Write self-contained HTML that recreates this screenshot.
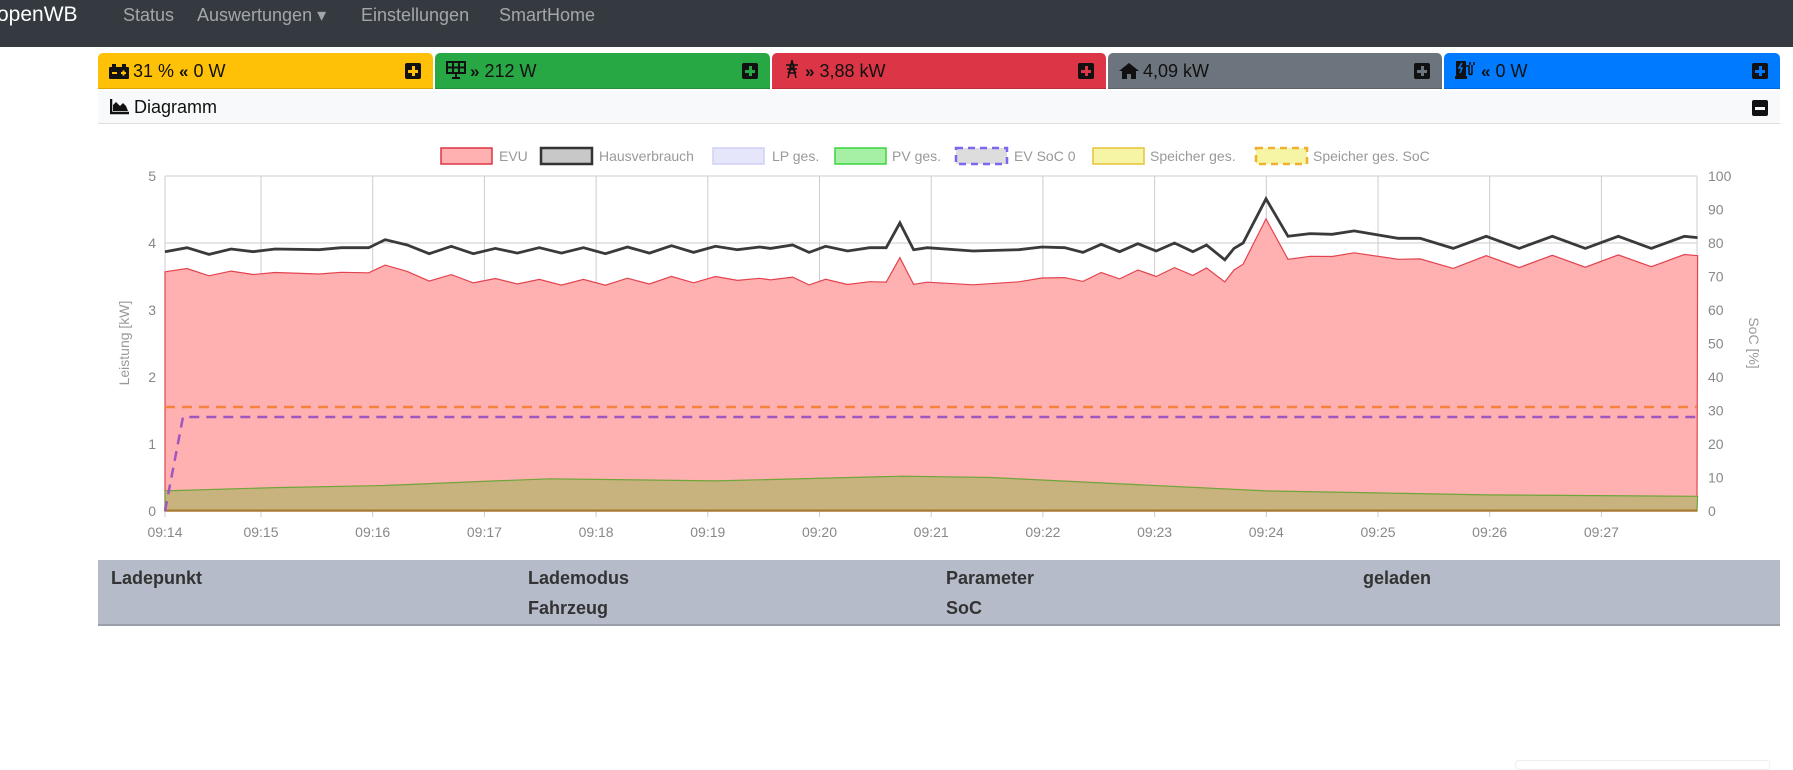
<!DOCTYPE html>
<html><head><meta charset="utf-8">
<style>
*{box-sizing:border-box;margin:0;padding:0}
body{width:1793px;height:766px;overflow:hidden;background:#fff;font-family:"Liberation Sans",sans-serif;position:relative}
.nav{position:absolute;left:0;top:0;width:1793px;height:47px;background:#343a40}
.nav span{position:absolute;top:5px;font-size:18px;color:rgba(255,255,255,.55);line-height:20px}
.nav .brand{color:#fff;font-size:21px;top:5px;left:-3px}
.tile{position:absolute;top:53px;height:36px;border-radius:5px 5px 0 0;font-size:18px;color:#111;line-height:36px;padding-left:11px;border-bottom:1px solid rgba(0,0,0,.15)}
.tile .pl{position:absolute;right:12px;top:10px;width:16px;height:16px;background:#111;border-radius:2px}
.tile .pl:before{content:"";position:absolute;left:7px;top:3px;width:3px;height:10px;background:var(--c)}
.tile .pl:after{content:"";position:absolute;left:3px;top:7px;width:10px;height:3px;background:var(--c)}
.ic{display:inline-block;vertical-align:-2px;margin-right:4px}
.hdr{position:absolute;left:98px;top:91px;width:1682px;height:33px;background:#f8f9fa;border-bottom:1px solid #ddd;font-size:18px;line-height:33px;padding-left:12px;color:#111}
.mn{position:absolute;right:12px;top:9px;width:16px;height:16px;background:#111;border-radius:2px}
.mn:after{content:"";position:absolute;left:3px;top:7px;width:10px;height:3px;background:#f8f9fa}
.tbl{position:absolute;left:98px;top:560px;width:1682px;height:66px;background:#b6bbca;border-bottom:2px solid #9a9ea9;font-weight:bold;font-size:18px;color:#333}
.tbl span{position:absolute}
svg text{font-family:"Liberation Sans",sans-serif}
</style></head><body>
<div class="nav">
<span class="brand">openWB</span>
<span style="left:123px">Status</span>
<span style="left:197px">Auswertungen &#9662;</span>
<span style="left:361px">Einstellungen</span>
<span style="left:499px">SmartHome</span>
</div>

<div class="tile" style="left:98px;width:335px;background:#ffc107;--c:#ffc107"><svg class="ic" width="20" height="16" viewBox="0 0 20 16"><rect x="0" y="4" width="20" height="12" rx="1" fill="#111"/><rect x="3" y="1" width="4" height="3" fill="#111"/><rect x="13" y="1" width="4" height="3" fill="#111"/><rect x="3" y="9" width="5" height="2" fill="#ffc107"/><rect x="12" y="9" width="5" height="2" fill="#ffc107"/><rect x="13.5" y="7.5" width="2" height="5" fill="#ffc107"/></svg>31 % <b style="font-size:17px">&#171;</b> 0 W<i class="pl"></i></div>
<div class="tile" style="left:435px;width:335px;background:#28a745;--c:#28a745"><svg class="ic" width="20" height="18" viewBox="0 0 20 18"><rect x="1" y="1" width="18" height="11" fill="none" stroke="#111" stroke-width="2"/><path d="M7 1v11M13 1v11M1 6.5h18M10 12v4M6 17h8" stroke="#111" stroke-width="2"/></svg><b style="font-size:17px">&#187;</b> 212 W<i class="pl"></i></div>
<div class="tile" style="left:772px;width:334px;background:#dc3545;--c:#dc3545"><svg class="ic" width="18" height="20" viewBox="0 0 18 20"><path d="M9 1L5 19M9 1l4 18M3 6h12M4 10h10M6 14h6M6 6l7 8M12 6l-7 8" stroke="#111" stroke-width="1.5" fill="none"/></svg><b style="font-size:17px">&#187;</b> 3,88 kW<i class="pl"></i></div>
<div class="tile" style="left:1108px;width:334px;background:#6c757d;--c:#6c757d"><svg class="ic" width="20" height="17" viewBox="0 0 20 17"><path d="M10 1L0 9h3v8h5v-5h4v5h5V9h3z" fill="#111"/></svg>4,09 kW<i class="pl"></i></div>
<div class="tile" style="left:1444px;width:336px;background:#007bff;--c:#007bff"><svg class="ic" width="22" height="19" viewBox="0 0 22 19"><rect x="1" y="1" width="10" height="15" rx="1" fill="#111"/><rect x="0" y="16" width="12" height="3" fill="#111"/><path d="M7 3l-3 5h3l-2 5" stroke="#007bff" stroke-width="1.5" fill="none"/><path d="M11 6h3v7c0 2 3 2 3 0V5M15 2v3M19 2v3" stroke="#111" stroke-width="1.6" fill="none"/></svg><b style="font-size:17px">&#171;</b> 0 W<i class="pl"></i></div>

<div class="hdr"><svg class="ic" width="20" height="17" viewBox="0 0 20 17"><path d="M1 1v14h18" stroke="#111" stroke-width="2.5" fill="none"/><path d="M3 13V7l3-3 4 4 3-3 3 3 2 5z" fill="#111"/></svg>Diagramm<i class="mn"></i></div>

<svg style="position:absolute;left:0;top:0" width="1793" height="766" id="ch">
<g font-size="14" fill="#999">
<rect x="441" y="148" width="51" height="16" fill="#ffb1b1" stroke="#dc3545" stroke-width="1.5"/><text x="499" y="161">EVU</text>
<rect x="541" y="148" width="51" height="16" fill="#c8c8c8" stroke="#333" stroke-width="2.5"/><text x="599" y="161">Hausverbrauch</text>
<rect x="713" y="148" width="51" height="16" fill="#e6e6fa" stroke="#d0d0f5" stroke-width="1.5"/><text x="772" y="161">LP ges.</text>
<rect x="835" y="148" width="51" height="16" fill="#a5f0a5" stroke="#3cd43c" stroke-width="1.5"/><text x="892" y="161">PV ges.</text>
<rect x="956" y="148" width="51" height="16" fill="#ddd" stroke="#7b68ee" stroke-width="2.5" stroke-dasharray="7,5"/><text x="1014" y="161">EV SoC 0</text>
<rect x="1093" y="148" width="51" height="16" fill="#f5f5a5" stroke="#e8c23c" stroke-width="1.5"/><text x="1150" y="161">Speicher ges.</text>
<rect x="1256" y="148" width="51" height="16" fill="#f5f5a5" stroke="#f0b030" stroke-width="2.5" stroke-dasharray="7,5"/><text x="1313" y="161">Speicher ges. SoC</text>
</g>
<g id="grid" stroke="#ccc" stroke-width="1"></g>
<path id="evu" fill="#ffb1b1" stroke="#e3434f" stroke-width="1.2"/>
<path id="pv" fill="#c8b37f" stroke="#6fa53a" stroke-width="1.2"/>
<path id="hv" fill="none" stroke="#3a3a3a" stroke-width="2.8"/>
<line x1="165" y1="510.5" x2="1697" y2="510.5" stroke="#a8782c" stroke-width="2"/>
<line x1="165" y1="407" x2="1697" y2="407" stroke="#f4823c" stroke-width="2.5" stroke-dasharray="10,7"/>
<path d="M165 511L183 417H1697" fill="none" stroke="#a055c0" stroke-width="2.5" stroke-dasharray="10,7"/>
<g id="lab" font-size="14" fill="#888"></g>
<text transform="translate(129,343) rotate(-90)" font-size="14" fill="#999" text-anchor="middle">Leistung [kW]</text>
<text transform="translate(1749,343) rotate(90)" font-size="14" fill="#999" text-anchor="middle">SoC [%]</text>
</svg>

<div class="tbl">
<span style="left:13px;top:8px">Ladepunkt</span>
<span style="left:430px;top:8px">Lademodus</span>
<span style="left:848px;top:8px">Parameter</span>
<span style="left:1265px;top:8px">geladen</span>
<span style="left:430px;top:38px">Fahrzeug</span>
<span style="left:848px;top:38px">SoC</span>
</div>
<div style="position:absolute;left:1515px;top:760px;width:255px;height:10px;border:1px solid #eee;border-radius:4px"></div>

<script>
var X0=165,X1=1697,YB=511,K=67,M=110.1;
function px(t){return X0+t*M}function py(v){return YB-v*K}
var g=document.getElementById('grid'),lab=document.getElementById('lab'),s='',l='';
for(var i=0;i<=5;i++){var y=py(i);s+='<line x1="'+X0+'" y1="'+y+'" x2="'+X1+'" y2="'+y+'"/>';l+='<text x="156" y="'+(y+5)+'" text-anchor="end">'+i+'</text>';}
for(var i=0;i<=10;i++){var y=py(i*.5);l+='<text x="1708" y="'+(y+5)+'">'+(i*10)+'</text>';}
for(var i=0;i<=13;i++){var x=i==0?X0:261+(i-1)*111.7;s+='<line x1="'+x+'" y1="176" x2="'+x+'" y2="517"/>';l+='<text x="'+x+'" y="537" text-anchor="middle">09:'+(14+i)+'</text>';}
s+='<line x1="'+X1+'" y1="176" x2="'+X1+'" y2="511"/>';
g.innerHTML=s;lab.innerHTML=l;
function interp(pts,t){for(var i=1;i<pts.length;i++){if(t<=pts[i][0]){var a=pts[i-1],b=pts[i],f=(t-a[0])/(b[0]-a[0]);return a[1]+f*(b[1]-a[1]);}}return pts[pts.length-1][1];}
var pvP=[[0,.3],[1,.35],[2,.38],[3,.45],[3.5,.48],[5,.45],[6.7,.52],[7.5,.5],[8.5,.42],[10,.3],[11,.27],[12,.24],[13.92,.22]];
var hvP=[[0,3.87],[.2,3.93],[.4,3.83],[.6,3.91],[.8,3.87],[1,3.91],[1.4,3.9],[1.6,3.93],[1.85,3.93],[2,4.05],[2.2,3.97],[2.4,3.84],[2.6,3.95],[2.8,3.84],[3,3.92],[3.2,3.85],[3.4,3.93],[3.6,3.85],[3.8,3.93],[4,3.84],[4.2,3.94],[4.4,3.85],[4.6,3.96],[4.8,3.86],[5,3.95],[5.2,3.9],[5.4,3.94],[5.5,3.92],[5.7,3.97],[5.85,3.86],[6,3.95],[6.2,3.88],[6.4,3.93],[6.55,3.93],[6.7,4.3],[6.85,3.9],[7,3.93],[7.5,3.88],[8,3.9],[8.25,3.94],[8.5,3.93],[8.7,3.86],[8.9,3.98],[9.1,3.87],[9.3,3.99],[9.5,3.88],[9.7,4.0],[9.9,3.87],[10.05,3.97],[10.25,3.75],[10.35,3.92],[10.45,4.0],[10.7,4.66],[10.9,4.1],[11.1,4.14],[11.3,4.13],[11.5,4.18],[11.9,4.07],[12.1,4.07]];
hvP=hvP.map(function(p){var t=p[0];if(t>6.55&&t<=10.7)t=6.55+(t-6.55)*(10-6.55)/(10.7-6.55);else if(t>10.7)t=10+(t-10.7)*(11.4-10)/(12.1-10.7);return [t,p[1]];});
for(var k=0;k<8;k++){hvP.push([11.7+k*0.3,k%2?4.1:3.92]);}
hvP.push([13.92,4.08]);
var hv='',ev='',pv='';
for(var i=0;i<hvP.length;i++){var t=hvP[i][0],h=hvP[i][1],p=interp(pvP,t);hv+=(i?'L':'M')+px(t).toFixed(1)+' '+py(h).toFixed(1);ev+=(i?'L':'M')+px(t).toFixed(1)+' '+py(h-p+(t>10.2?-0.05:0)).toFixed(1);}
document.getElementById('hv').setAttribute('d',hv);
document.getElementById('evu').setAttribute('d',ev+'L'+X1+' '+YB+'L'+X0+' '+YB+'Z');
for(var i=0;i<pvP.length;i++){pv+=(i?'L':'M')+px(pvP[i][0]).toFixed(1)+' '+py(pvP[i][1]).toFixed(1);}
document.getElementById('pv').setAttribute('d',pv+'L'+X1+' '+YB+'L'+X0+' '+YB+'Z');
</script>
</body></html>
